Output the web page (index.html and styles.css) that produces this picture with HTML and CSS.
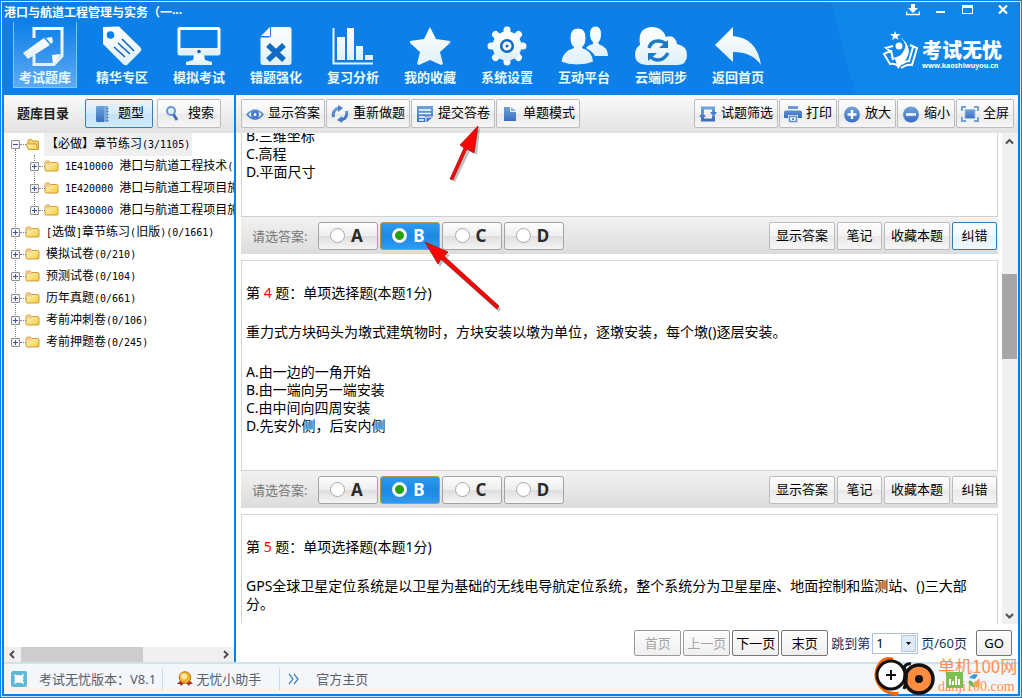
FILE: index.html
```html
<!DOCTYPE html>
<html lang="zh-CN">
<head>
<meta charset="utf-8">
<title>港口与航道工程管理与实务</title>
<link rel="stylesheet" href="styles.css">
</head>
<body>
<svg class="defs" aria-hidden="true">
  <defs>
    <linearGradient id="white" x1="0" y1="0" x2="0" y2="1"><stop offset="0" stop-color="#ffffff"/><stop offset="1" stop-color="#dff1f8"/></linearGradient>
    <linearGradient id="blue" x1="0" y1="0" x2="0" y2="1"><stop offset="0" stop-color="#6fa3da"/><stop offset="1" stop-color="#3a6dc0"/></linearGradient>
    <linearGradient id="gold" x1="0" y1="0" x2="1" y2="1"><stop offset="0" stop-color="#fffbd0"/><stop offset="1" stop-color="#f3c93c"/></linearGradient>
    <symbol id="folder" viewBox="0 0 15 13">
      <path d="M1 10V2.500Q1 1 2.500 1H5L6.500 2.500H12.500Q14 2.500 14 4V10Q14 11 13 11H2Q1 11 1 10Z" fill="url(#gold)" stroke="#d19a2c"/>
      <path d="M2 4.500V2Q2 1.500 3 1.500H5L6.500 3V4.500Z" fill="#f6c48c"/>
    </symbol>
    <symbol id="folder-open" viewBox="0 0 15 13">
      <path d="M3 10V3Q3 1.500 4.500 1.500H6.500L8 3H12.500Q13.500 3 13.500 4V11H3Z" fill="#f3d06b" stroke="#d19a2c"/>
      <path d="M1 6H11L13.500 11.500H3.500Z" fill="url(#gold)" stroke="#d19a2c"/>
    </symbol>
  </defs>
</svg>

<div class="window">
<div class="frame">
  <header class="header">
    <div class="titlebar">
      <h1 class="title">港口与航道工程管理与实务（一···</h1>
      <div class="controls">
        <button class="control" aria-label="下载"><svg width="14" height="12" viewBox="0 0 14 12"><path d="M5 0h4v4h3L7 9 2 4h3z" fill="#fff"/><path d="M.5 7.500v3h13v-3" fill="none" stroke="#fff" stroke-width="1.500"/></svg></button>
        <button class="control" aria-label="最小化"><svg width="10" height="12" viewBox="0 0 10 12"><path d="M0 7h9v2H0z" fill="#fff"/></svg></button>
        <button class="control" aria-label="最大化"><svg width="12" height="12" viewBox="0 0 12 12"><path d="M.5 1.500h10v8H.5z" fill="none" stroke="#fff"/><path d="M0 1h11v3H0z" fill="#fff"/></svg></button>
        <button class="control close" aria-label="关闭"><svg width="10" height="12" viewBox="0 0 10 12"><path d="M1 1.500l8 8M9 1.500l-8 8" stroke="#fff" stroke-width="2.200"/></svg></button>
      </div>
    </div>
    <div class="banner">
      <nav class="nav">
        <button class="nav-item active"><svg width="44" height="44" viewBox="0 0 44 44"><path d="M11 14V4.500H39V32L31 40.500H11V31" fill="none" stroke="url(#white)" stroke-width="3"/><path d="M38 30l-9 1 1 10z" fill="#fff"/><path d="M0 29L21 14l6 7-22 14z" fill="url(#white)"/><path d="M23 14l6-1 1 5-2 2z" fill="url(#white)"/></svg><span>考试题库</span></button>
        <button class="nav-item"><svg width="44" height="44" viewBox="0 0 44 44"><path d="M3 3L19 2.500 41 24Q42 26 40 28L27 41Q25 42 23 40L3 20Z" fill="url(#white)"/><circle cx="10.500" cy="11" r="3.800" fill="#0d7fe8"/><path d="M14 23l11 10M18 19l12 11M22 15l12 12" stroke="#0d66bd" stroke-width="1.500"/></svg><span>精华专区</span></button>
        <button class="nav-item"><svg width="44" height="44" viewBox="0 0 44 44"><path d="M3 3H41Q43.500 3 43.500 5.500V29Q43.500 31.500 41 31.500H3Q.5 31.500.5 29V5.500Q.5 3 3 3ZM3.500 6V24H40.500V6Z" fill="url(#white)" fill-rule="evenodd"/><circle cx="22" cy="27.500" r="1.800" fill="#0d66bd"/><path d="M17 31H27L28 36 35 38V41H9V38L16 36Z" fill="url(#white)"/></svg><span>模拟考试</span></button>
        <button class="nav-item"><svg width="44" height="44" viewBox="0 0 44 44"><path d="M17 3H35Q37.500 3 37.500 5.500V38Q37.500 41 35 41H9Q6.500 41 6.500 38V13.500H14Q17 13.500 17 11Z" fill="url(#white)"/><path d="M7 12L16 3V12Z" fill="#fff"/><path d="M14 21L30 36M30 21L14 36" stroke="#126bc2" stroke-width="5.500"/></svg><span>错题强化</span></button>
        <button class="nav-item"><svg width="44" height="44" viewBox="0 0 44 44"><path d="M2.500 4V39.500H42" fill="none" stroke="#e9f6fc" stroke-width="2"/><path d="M6 13h8v23H6zM16 4h7v32h-7zM25 22h7v14h-7zM34 31h8v5h-8z" fill="url(#white)"/></svg><span>复习分析</span></button>
        <button class="nav-item"><svg width="44" height="44" viewBox="0 0 44 44"><path d="M22 3L28 15 42 17Q42.500 18 42 19L32 28 35 40 33 41 22 36 11 41 9 40 12 28 2 19V17L16 15Z" fill="url(#white)"/></svg><span>我的收藏</span></button>
        <button class="nav-item"><svg width="44" height="44" viewBox="0 0 44 44"><g stroke="#f2fafd" stroke-width="7" stroke-linecap="round"><path d="M22 6V12M22 32V38M6 22H12M32 22H38M10.500 10.500L15 15M29 29L33.500 33.500M33.500 10.500L29 15M15 29L10.500 33.500"/></g><circle cx="22" cy="22" r="10.500" fill="none" stroke="url(#white)" stroke-width="8"/><circle cx="22" cy="22" r="7" fill="#126bc2"/><circle cx="22" cy="22" r="4.500" fill="#f2fafd"/><circle cx="22" cy="22" r="1.500" fill="#126bc2"/></svg><span>系统设置</span></button>
        <button class="nav-item"><svg width="48" height="44" viewBox="0 0 48 44"><path d="M30 10Q30 2.500 35.500 2.500T41 10Q41 16 38.500 18V20Q48 23 48 32H35Q32 27 26 24Q28 21 33 20V18Q30 15 30 10Z" fill="url(#white)"/><path d="M10 14Q10 4 18 4T26 14Q26 21 22 23.500Q33 27 33.500 38Q26 41 17 41T1 38Q2 27 14 23.500Q10 21 10 14Z" fill="url(#white)" stroke="#0d7fe8" stroke-width="1"/></svg><span>互动平台</span></button>
        <button class="nav-item"><svg width="54" height="44" viewBox="0 0 54 44"><path d="M12 41Q1 40 1 31 1 24 6 21 3 3 19 3 28 3 32 13 41 10 43 20 53 22 53 31 53 41 43 41Z" fill="url(#white)"/><path d="M15 24Q17 17 24 17 29 17 32 20M34 29Q30 36 24 36 19 36 16 32" stroke="#1c7ac6" stroke-width="3.500" fill="none"/><path d="M34 16v8h-9zM14 37v-8h9z" fill="#1c7ac6"/></svg><span>云端同步</span></button>
        <button class="nav-item"><svg width="48" height="44" viewBox="0 0 48 44"><path d="M1 21L19 3V12Q43 14 47 41 38 28 19 28V38Z" fill="url(#white)"/></svg><span>返回首页</span></button>
      </nav>
      <div class="brand">
        <svg width="38" height="40" viewBox="0 0 38 40"><path d="M13 1l1.500 3 4 0-3 2.500 1 3.500-3-2-3.500 2 1-3.500-3-2.500h4z" fill="#fff"/><circle cx="17" cy="16" r="3.500" fill="#fff"/><path d="M18 7Q34 19 21 33L16 39 14 32Q13 27 7 28 18 28 21 22 27 15 18 7Z" fill="#fff"/><path d="M11 16L4 18 8 21 2 24 8 34Q13 33 16 36M28 15L35 18 30 35Q25 34 19 38M31 17L27 31Q23 31 20 34M9 20L11 30" fill="none" stroke="#fff" stroke-width="2"/></svg>
        <div class="brand-text"><strong>考试无忧</strong><span>www.kaoshiwuyou.cn</span></div>
      </div>
    </div>
  </header>

  <div class="main">
    <aside class="sidebar">
      <div class="toolbar side-tools">
        <h2 class="side-title">题库目录</h2>
        <button class="btn side-btn selected"><svg width="18" height="18" viewBox="0 0 18 18"><path d="M3 1H10V17H3Q2 17 2 15V3Q2 1 3 1Z" fill="url(#blue)"/><path d="M10 1h4v16h-4z" fill="#7fabd9"/><path d="M13.500 3v13" stroke="#4d7fc4" stroke-width="2" stroke-dasharray="1 2"/></svg><span>题型</span></button>
        <button class="btn side-btn"><svg width="18" height="18" viewBox="0 0 18 18"><circle cx="7" cy="6" r="4" fill="#e6f0fa" stroke="#6598d2" stroke-width="2"/><path d="M9.500 9.500L13 15" stroke="#3a6dc0" stroke-width="3"/></svg><span>搜索</span></button>
      </div>
      <ul class="tree">
        <li>
          <div class="row"><button class="toggle open" aria-label="折叠"></button><svg class="folder"><use href="#folder-open"/></svg><span class="name current">【必做】章节练习<span class="num">(3/1105)</span></span></div>
          <ul class="branch">
            <li class="row"><button class="toggle" aria-label="展开"></button><svg class="folder"><use href="#folder"/></svg><span class="name"><span class="num">1E410000 </span>港口与航道工程技术<span class="num">(</span></span></li>
            <li class="row"><button class="toggle" aria-label="展开"></button><svg class="folder"><use href="#folder"/></svg><span class="name"><span class="num">1E420000 </span>港口与航道工程项目施</span></li>
            <li class="row"><button class="toggle" aria-label="展开"></button><svg class="folder"><use href="#folder"/></svg><span class="name"><span class="num">1E430000 </span>港口与航道工程项目施</span></li>
          </ul>
        </li>
        <li class="row"><button class="toggle" aria-label="展开"></button><svg class="folder"><use href="#folder"/></svg><span class="name"><span class="num">[</span>选做<span class="num">]</span>章节练习<span class="num">(</span>旧版<span class="num">)(0/1661)</span></span></li>
        <li class="row"><button class="toggle" aria-label="展开"></button><svg class="folder"><use href="#folder"/></svg><span class="name">模拟试卷<span class="num">(0/210)</span></span></li>
        <li class="row"><button class="toggle" aria-label="展开"></button><svg class="folder"><use href="#folder"/></svg><span class="name">预测试卷<span class="num">(0/104)</span></span></li>
        <li class="row"><button class="toggle" aria-label="展开"></button><svg class="folder"><use href="#folder"/></svg><span class="name">历年真题<span class="num">(0/661)</span></span></li>
        <li class="row"><button class="toggle" aria-label="展开"></button><svg class="folder"><use href="#folder"/></svg><span class="name">考前冲刺卷<span class="num">(0/106)</span></span></li>
        <li class="row"><button class="toggle" aria-label="展开"></button><svg class="folder"><use href="#folder"/></svg><span class="name">考前押题卷<span class="num">(0/245)</span></span></li>
      </ul>
      <div class="hscroll">
        <svg width="17" height="15" viewBox="0 0 17 15"><path d="M10 4L6.500 7.500 10 11" fill="none" stroke="#505050" stroke-width="2"/></svg>
        <div class="htrack"><div class="hthumb"></div></div>
        <svg width="17" height="15" viewBox="0 0 17 15"><path d="M7 4l3.500 3.500L7 11" fill="none" stroke="#505050" stroke-width="2"/></svg>
      </div>
    </aside>

    <section class="content">
      <div class="toolbar">
        <button class="btn"><svg width="18" height="18" viewBox="0 0 18 18"><path d="M0 9.500Q9-1 18 9.500 9 20 0 9.500Z" fill="url(#blue)"/><path d="M2.500 9.500Q9 2 15.500 9.500 9 17 2.500 9.500Z" fill="#f4f8fc"/><circle cx="9" cy="9.500" r="4" fill="#4479c6"/><circle cx="9" cy="9.500" r="1.500" fill="#fff"/></svg><span>显示答案</span></button>
        <button class="btn"><svg width="18" height="18" viewBox="0 0 18 18"><path d="M2.500 12Q1 5 8 3M15.500 6Q17 13 10 15" fill="none" stroke="url(#blue)" stroke-width="3"/><path d="M7 0v7l5-4zM11 11v7l-5-3z" fill="#4a80ca"/></svg><span>重新做题</span></button>
        <button class="btn"><svg width="18" height="18" viewBox="0 0 18 18"><path d="M1 1H17V12L11 17H1Z" fill="url(#blue)"/><path d="M3 5h12M3 8.500h12M3 12h6M3 15h5" stroke="#fff" stroke-width="1.300"/><path d="M10 17V12h7" fill="none" stroke="#fff"/></svg><span>提交答卷</span></button>
        <button class="btn"><svg width="18" height="18" viewBox="0 0 18 18"><path d="M3 2H9V7H15V16H3Z" fill="url(#blue)"/><path d="M10 2L15 6H10Z" fill="#8bb4e2"/></svg><span>单题模式</span></button>
        <span class="spacer"></span>
        <button class="btn"><svg width="18" height="18" viewBox="0 0 18 18"><path d="M3.500 8V3H14.500V9M14.500 11V15H3.500V10" fill="none" stroke="url(#blue)" stroke-width="3"/><path d="M3.500 7l3.500 5H0zM14.500 12L11 7h7z" fill="#4a80ca"/></svg><span>试题筛选</span></button>
        <button class="btn"><svg width="18" height="18" viewBox="0 0 18 18"><path d="M4 1h10v3H4zM0 7Q0 5.500 2 5.500H16Q18 5.500 18 7V13H14V10H4V13H0Z" fill="url(#blue)"/><path d="M5.500 11.500h7v5h-7z" fill="#fff" stroke="#5b90d0" stroke-width="1.500"/><path d="M8 13h2v2H8z" fill="#5b90d0"/></svg><span>打印</span></button>
        <button class="btn"><svg width="18" height="18" viewBox="0 0 18 18"><circle cx="9" cy="9.500" r="8" fill="url(#blue)"/><path d="M9 5v9M4.500 9.500h9" stroke="#fff" stroke-width="2.500"/></svg><span>放大</span></button>
        <button class="btn"><svg width="18" height="18" viewBox="0 0 18 18"><circle cx="9" cy="9.500" r="8" fill="url(#blue)"/><path d="M4 9.500h10" stroke="#fff" stroke-width="2.500"/></svg><span>缩小</span></button>
        <button class="btn"><svg width="18" height="18" viewBox="0 0 18 18"><path d="M1 6V2H5M13 2H17V6M17 12V16H13M5 16H1V12" fill="none" stroke="#6fa3da" stroke-width="2"/><path d="M4 4.500h10v9H4z" fill="url(#blue)" stroke="#9cc1e8"/></svg><span>全屏</span></button>
      </div>

      <div class="viewport">
        <div class="questions">
          <article class="question partial">
            <div class="q-body">
              <ul class="choices"><li>B.三维坐标</li><li>C.高程</li><li>D.平面尺寸</li></ul>
            </div>
            <div class="q-bar">
              <span class="q-label">请选答案:</span>
              <label class="opt"><input type="radio" name="q3">A</label>
              <label class="opt"><input type="radio" name="q3" checked>B</label>
              <label class="opt"><input type="radio" name="q3">C</label>
              <label class="opt"><input type="radio" name="q3">D</label>
              <span class="spacer"></span>
              <button class="btn q-btn">显示答案</button><button class="btn q-btn">笔记</button><button class="btn q-btn">收藏本题</button><button class="btn q-btn focused">纠错</button>
            </div>
          </article>
          <article class="question">
            <div class="q-body">
              <h3 class="q-title">第 <em>4</em> 题：单项选择题(本题1分)</h3>
              <p class="q-text">重力式方块码头为墩式建筑物时，方块安装以墩为单位，逐墩安装，每个墩()逐层安装。</p>
              <ul class="choices"><li>A.由一边的一角开始</li><li>B.由一端向另一端安装</li><li>C.由中间向四周安装</li><li>D.先安外侧，后安内侧</li></ul>
            </div>
            <div class="q-bar">
              <span class="q-label">请选答案:</span>
              <label class="opt"><input type="radio" name="q4">A</label>
              <label class="opt"><input type="radio" name="q4" checked>B</label>
              <label class="opt"><input type="radio" name="q4">C</label>
              <label class="opt"><input type="radio" name="q4">D</label>
              <span class="spacer"></span>
              <button class="btn q-btn">显示答案</button><button class="btn q-btn">笔记</button><button class="btn q-btn">收藏本题</button><button class="btn q-btn">纠错</button>
            </div>
          </article>
          <article class="question">
            <div class="q-body">
              <h3 class="q-title">第 <em>5</em> 题：单项选择题(本题1分)</h3>
              <p class="q-text">GPS全球卫星定位系统是以卫星为基础的无线电导航定位系统，整个系统分为卫星星座、地面控制和监测站、()三大部分。</p>
            </div>
          </article>
        </div>
        <div class="vscroll">
          <svg width="15" height="17" viewBox="0 0 15 17"><path d="M4 10.500L7.500 7 11 10.500" fill="none" stroke="#505050" stroke-width="2"/></svg>
          <div class="vtrack"><div class="vthumb"></div></div>
          <svg width="15" height="17" viewBox="0 0 15 17"><path d="M4 7l3.500 3.500L11 7" fill="none" stroke="#505050" stroke-width="2"/></svg>
        </div>
      </div>

      <div class="pager">
        <button class="page-btn" disabled>首页</button>
        <button class="page-btn" disabled>上一页</button>
        <button class="page-btn">下一页</button>
        <button class="page-btn">末页</button>
        <label class="jump" for="page">跳到第</label>
        <span class="select"><select id="page"><option>1</option></select><svg width="15" height="17" viewBox="0 0 15 17"><path d="M.5.5h14v16H.5z" fill="#dfeaf8" stroke="#b0c8e4"/><path d="M5 7h5L7.500 10z" fill="#000"/></svg></span>
        <span class="jump">页/60页</span>
        <button class="page-btn go">GO</button>
      </div>
    </section>
  </div>

  <footer class="status">
    <svg width="16" height="16" viewBox="0 0 16 16"><rect width="16" height="16" rx="2" fill="#62b9d4"/><path d="M3 3l3.500 1.500L8 4l1.500.5L13 3 12 6.500 12.500 8l-.5 1.500 1 3.500-3.500-1.500L8 12l-1.500-.5L3 13l1-3.500L3.500 8 4 6.500z" fill="#fff"/></svg>
    <span class="version">考试无忧版本：V8.1</span>
    <span class="divider"></span>
    <svg width="16" height="16" viewBox="0 0 16 16"><path d="M4 9L0 13l3 0 1 2 4-4 4 4 1-2 3 0-4-4z" fill="#b3221c"/><circle cx="8" cy="6.500" r="5.800" fill="#f0b429" stroke="#b5741a"/><circle cx="7" cy="5.500" r="3" fill="#ffe9a0"/></svg>
    <span class="helper">无忧小助手</span>
    <span class="divider"></span>
    <svg width="11" height="12" viewBox="0 0 11 12"><path d="M1 1l4 5-4 5M6 1l4 5-4 5" fill="none" stroke="#4a86c0" stroke-width="1.300"/></svg>
    <a class="home" href="#">官方主页</a>
  </footer>
</div>

<svg class="pointer submit" width="42" height="64" viewBox="0 0 42 64"><path d="M31 2L28 29 21 25 6 56 4 55 18 25 14 21Z" transform="translate(2 2)" fill="#000" opacity=".25"/><path d="M31 2L27 29 20 25 6 56 3 55 17 24 13 21Z" fill="#fb0606" stroke="#8a1010" stroke-width=".7"/></svg>
<svg class="pointer choice" width="80" height="74" viewBox="0 0 80 74"><path d="M2 1L15 23 18 18 74 68 76 65 21 15 25 11Z" transform="translate(2 3)" fill="#000" opacity=".25"/><path d="M2 1L15 23 18 18 74 68 76 65 21 15 25 11Z" fill="#fb0606" stroke="#8a1010" stroke-width=".7"/></svg>

<div class="watermark">
  <svg width="62" height="42" viewBox="0 0 62 42"><path d="M21 3Q10-1 4 10-2 22 6 32 12 40 24 41L26 37Q14 38 8 30 2 20 7 11 11 4 19 5Z" fill="#f60"/><circle cx="18" cy="20" r="14" fill="#fff" stroke="#111" stroke-width="3"/><path d="M18 15v10M13 20h10" stroke="#111" stroke-width="2"/><circle cx="46" cy="24" r="14" fill="#ff8c40" stroke="#111" stroke-width="3.500"/><circle cx="46" cy="24" r="4" fill="#111"/><path d="M31 12Q36 20 31 34M31 12Q34 8 38 9" fill="none" stroke="#111" stroke-width="3"/></svg>
  <svg class="chart" width="38" height="20" viewBox="0 0 38 20"><rect x="1" y="2" width="17" height="16" fill="#7cbf4e"/><path d="M5 15v-6M8 15V11M11 15V6M14 15V9" stroke="#fff" stroke-width="2"/><path d="M24 8q5-6 9-3l-3 4z" fill="#3d9ce0"/><path d="M34 8q3 7-3 10l-2-4z" fill="#f5a04a"/><path d="M29 17q-5 0-5-7l4 2z" fill="#63b95a"/></svg>
  <div class="mark-text"><span class="mark-name">单机100网</span><span class="mark-url">danji100.com</span></div>
</div>
</div>
</body>
</html>
```
FILE: styles.css
```css
* { box-sizing: border-box; }
html, body { height: 100%; margin: 0; }
body { font: 13px/18px "Noto Sans", "Noto Sans CJK SC", sans-serif; color: #000; overflow: hidden; }
h1, h2, h3, p, ul { margin: 0; padding: 0; font-size: inherit; }
ul { list-style: none; }
button, select { font: inherit; color: inherit; padding: 0; margin: 0; }
svg { flex: none; display: block; }
.defs { position: absolute; width: 0; height: 0; }
.spacer { flex: 1; }

.window { position: relative; height: 100vh; border: 1px solid #0d7fe8; padding: 1px; background: #cfe8fb; }
.frame { height: 100%; border: 2px solid #0d7fe8; border-top: 0; display: flex; flex-direction: column; background: #fff; }

.header { flex: none; height: 93px; background: linear-gradient(75deg, transparent 82%, #0e86ea 82%) #0d7fe8; color: #fff; }
.titlebar { display: flex; justify-content: space-between; height: 20px; }
.title { font: bold 12px/22px "Noto Sans", "Noto Sans CJK SC", sans-serif; }
.controls { display: flex; gap: 16px; padding: 2px 10px 0 0; align-items: flex-start; }
.control { border: 0; background: none; }
.close { margin-left: 8px; }
.banner { display: flex; justify-content: space-between; padding-left: 9px; }
.nav { display: flex; gap: 13px; }
.nav-item { width: 64px; height: 66px; border: 1px solid transparent; background: none; display: flex; flex-direction: column; align-items: center; font: bold 13px/18px "Noto Sans CJK SC", sans-serif; color: #e6fbff; padding-top: 1px; }
.nav-item.active { background: linear-gradient(#0d7fe8, #5faaf2); border-color: #2b92ee #7ccaf8 #7ccaf8; border-top: 0; padding-top: 2px; }
.brand { display: flex; gap: 2px; padding: 8px 16px 0 0; }
.brand-text { display: flex; flex-direction: column; width: 80px; padding-top: 8px; }
.brand-text strong { font: 900 20px/24px "Noto Sans CJK SC", sans-serif; }
.brand-text span { font: bold 7px/8px "Noto Sans", sans-serif; }

.main { flex: 1; min-height: 0; display: flex; }
.toolbar { flex: none; height: 38px; display: flex; gap: 1px; padding: 4px 4px 0 5px; background: linear-gradient(#fafafa, #e2e2e2); }
.btn { height: 29px; display: flex; align-items: center; gap: 4px; padding: 0 4px; border: 1px solid #bcbcbc; border-radius: 2px; background: linear-gradient(#fefefe, #f3f3f3 50%, #e9e9e9 51%, #f6f6f6); line-height: 18px; white-space: nowrap; }
.btn span { padding-bottom: 4px; }

.sidebar { width: 232px; flex: none; display: flex; flex-direction: column; border-right: 2px solid #0d7fe8; }
.side-tools { padding-left: 13px; }
.side-title { font: bold 13px/27px "Noto Sans CJK SC", sans-serif; color: #222; margin-right: 15px; }
.side-btn { width: 68px; gap: 6px; padding: 0 8px; }
.side-btn + .side-btn { width: 64px; margin-left: 3px; padding: 0 6px; }
.btn.selected { border-color: #3080b8; background: linear-gradient(#eaf5fc, #d3eafa 50%, #c2e2f7 51%, #d3ecfb); }
.btn.focused { border-color: #3080b8; background: linear-gradient(#fcfeff, #f0f8fc 50%, #e6f3fa 51%, #f0f8fc); }

.tree { position: relative; flex: 1; min-height: 0; overflow: hidden; padding-left: 7px; font: 12px/22px "Noto Sans CJK SC", sans-serif; }
.tree::before, .branch::before { content: ""; position: absolute; left: 11px; top: 16px; height: 194px; border-left: 1px dotted #808080; }
.row { position: relative; display: flex; align-items: center; height: 22px; white-space: nowrap; }
.branch { position: relative; padding-left: 19px; }
.branch::before { left: 23px; top: 0; height: 56px; }
.toggle { position: relative; width: 9px; height: 9px; flex: none; border: 1px solid #8f8f8f; border-radius: 1px; background: linear-gradient(#3a5a9c, #3a5a9c) center / 5px 1px no-repeat, linear-gradient(#3a5a9c, #3a5a9c) center / 1px 5px no-repeat, #f4f4f4; }
.toggle.open { background: linear-gradient(#3a5a9c, #3a5a9c) center / 5px 1px no-repeat, #f4f4f4; }
.row .toggle::after { content: ""; position: absolute; left: 8px; top: 3px; width: 6px; border-top: 1px dotted #808080; }
.folder { width: 15px; height: 13px; margin: 0 4px 0 5px; }
.name { padding: 0 2px; }
.name.current { background: #efefef; }
.num { font-family: "DejaVu Sans Mono", monospace; font-size: 10px; white-space: pre; }
.hscroll { flex: none; height: 15px; display: flex; background: #f0f0f0; }
.htrack { flex: 1; }
.hthumb { width: 62%; height: 15px; background: #cdcdcd; }

.content { flex: 1; min-width: 0; display: flex; flex-direction: column; }
.viewport { flex: 1; min-height: 0; display: flex; overflow: hidden; }
.questions { flex: 1; min-width: 0; padding: 0 4px 0 5px; overflow: hidden; }
.question { border: 1px solid #d6d6d6; border-bottom: 0; margin-bottom: 6px; }
.question.partial { border-top: 0; margin-top: -7px; }
.q-body { padding: 22px 4px 35px; font-size: 14px; line-height: 18px; }
.partial .q-body { padding-top: 0; }
.q-title { font-weight: normal; line-height: 20px; }
.q-title em { font-style: normal; color: #f00; }
.q-text { padding: 20px 0; }
.choices { padding-top: 2px; }
.partial .choices { padding-top: 1px; }
.q-bar { display: flex; align-items: center; gap: 2px; height: 38px; margin: 0 -1px; border-top: 1px solid #cfcfcf; padding: 0 1px 0 11px; background: linear-gradient(#f2f2f2, #dcdcdc); }
.q-label { font: 13px/18px "Noto Sans", "Noto Sans CJK SC", sans-serif; color: #777; width: 64px; }
.opt { width: 60px; height: 28px; display: flex; align-items: center; justify-content: center; gap: 6px; padding-right: 3px; border: 1px solid #a3a3a3; border-radius: 3px; background: linear-gradient(#fdfdfd, #eee 50%, #dedede 51%, #f5f5f5); font: bold 17px/24px "Noto Sans", sans-serif; color: #2b2b2b; }
.opt input { appearance: none; width: 15px; height: 15px; margin: 0; border: 1px solid #a8a8a8; border-radius: 50%; background: #fff; }
.opt:has(:checked) { color: #fff; border-color: #b39a55; background: linear-gradient(#2f9bf0, #1d88e6 50%, #2f9bf2); }
.opt input:checked { border-color: #fff; background: radial-gradient(circle, #27a012 4px, #fff 5px); }
.q-btn { min-width: 45px; height: 28px; padding: 0 6px 2px; justify-content: center; }

.vscroll { width: 16px; display: flex; flex-direction: column; background: #f0f0f0; }
.vtrack { flex: 1; padding-top: 124px; }
.vthumb { width: 15px; height: 85px; background: #a6a6a6; }

.pager { flex: none; height: 38px; display: flex; align-items: center; justify-content: flex-end; gap: 2px; padding-right: 6px; }
.page-btn { width: 47px; height: 26px; border: 1px solid #757575; border-radius: 2px; background: linear-gradient(#fdfdfd, #efefef); white-space: nowrap; }
.page-btn:disabled { color: #a5a5a5; border-color: #9a9a9a; }
.page-btn.go { width: 36px; margin-left: 7px; }
.jump { color: #1e2f55; padding-left: 1px; }
.select { position: relative; }
.select select { appearance: none; display: block; width: 46px; height: 21px; border: 1px solid #b0bfdb; border-radius: 0; background: #fff; padding-left: 3px; }
.select svg { position: absolute; right: 2px; top: 2px; pointer-events: none; }

.status { flex: none; height: 32px; display: flex; align-items: center; border-top: 2px solid #cfe3ef; background: #f3f7fc; padding-left: 7px; color: #5c6066; }
.version { margin: 0 6px 0 12px; }
.helper { margin: 0 18px 0 3px; }
.divider { width: 1px; height: 22px; background: #c9dff0; }
.divider + svg { margin-left: 14px; }
.helper + .divider + svg { margin-left: 8px; }
.home { margin-left: 17px; color: inherit; text-decoration: none; }

.pointer { position: absolute; pointer-events: none; }
.pointer.submit { left: 446px; top: 123px; }
.pointer.choice { left: 422px; top: 240px; }
.watermark { position: absolute; right: 0; bottom: 0; display: flex; gap: 3px; pointer-events: none; }
.mark-text { display: flex; flex-direction: column; width: 83px; color: #ff8f50; white-space: nowrap; }
.mark-name { font: 17px/22px "Noto Sans CJK SC", sans-serif; }
.mark-url { font: 14px/20px "Liberation Serif", serif; }
.chart { position: absolute; left: 72px; top: 15px; }
```
